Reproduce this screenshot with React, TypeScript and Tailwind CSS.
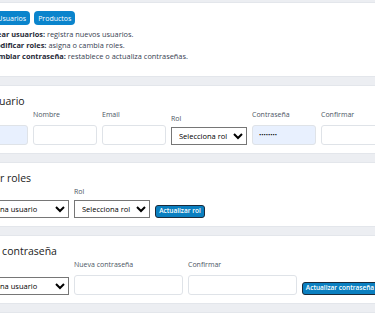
import { useState } from 'react';

const font = { fontFamily: '"Open Sans", "Noto Sans", Arial, sans-serif' };

const Label = ({ children, sel }: { children: string; sel?: boolean }) => (
    <label className={`block text-[7px] leading-[9px] text-[#4b5563] ${sel ? 'mb-[4px]' : 'mb-[6px]'}`}>{children}</label>
);

const TextField = ({ label, w, blue, value, type = 'text' }: { label: string; w: string; blue?: boolean; value?: string; type?: string }) => (
    <div>
        <Label>{label}</Label>
        <input
            type={type}
            defaultValue={value}
            className={`block ${w} h-[20px] px-[6px] text-[6px] border border-[#dfe3e8] rounded-[3px] outline-none ${blue ? 'bg-[#e8f0fe]' : 'bg-white'}`}
        />
    </div>
);

const SelectField = ({ label, w, placeholder }: { label: string; w: string; placeholder: string }) => (
    <div>
        <Label sel>{label}</Label>
        <select className={`block ${w} h-[18px] pl-[3px] text-[7.5px] text-black bg-white border border-[#767676]`}>
            <option>{placeholder}</option>
        </select>
    </div>
);

const ActionButton = ({ children, w }: { children: string; w: string }) => (
    <button className={`block ${w} h-[13px] shrink-0 rounded-[3px] border border-[#1b2a3a] bg-[#0a7fc0] text-white text-[6.5px] font-semibold leading-none`}>
        {children}
    </button>
);

const Card = ({ title, children }: { title: string; children: React.ReactNode }) => (
    <div className="bg-white border border-[#e3e6eb] rounded-[4px] px-[4px] pt-[8px] pb-[8px]">
        <h3 className="text-[10.5px] leading-[14px] mb-[2px] text-[#222]">{title}</h3>
        <div className="px-[6px]">{children}</div>
    </div>
);

export default function App() {
    const [tab, setTab] = useState('Usuarios');

    return (
        <div className="h-[320px] w-[375px] overflow-hidden bg-[#eceef2]" style={font}>
            <div className="-ml-[47px] w-[540px] pt-[2px] flex flex-col gap-[8px]">
                <div className="bg-white border border-[#e3e6eb] rounded-[4px] px-[10px] pt-[8px] pb-[14px]">
                    <div className="flex gap-[4px]">
                        {['Inicio', 'Usuarios', 'Productos'].map(t => (
                            <button
                                key={t}
                                onClick={() => setTab(t)}
                                className={`h-[14px] px-[4px] rounded-[4px] text-white text-[7px] leading-none ${tab === t ? 'bg-[#0a84cc]' : 'bg-[#0a84cc]'}`}
                            >
                                {t}
                            </button>
                        ))}
                    </div>
                    <ul className="mt-[4px] pl-[25px] list-disc text-[7.4px] leading-[11px] text-[#374151]">
                        <li><b className="text-[#1f2937]">Crear usuarios:</b> registra nuevos usuarios.</li>
                        <li><b className="text-[#1f2937]">Modificar roles:</b> asigna o cambia roles.</li>
                        <li><b className="text-[#1f2937]">Cambiar contraseña:</b> restablece o actualiza contraseñas.</li>
                    </ul>
                </div>

                <Card title="Crear usuario">
                    <div className="flex items-end gap-[5px]">
                        <TextField label="Usuario" w="w-[64px]" blue />
                        <TextField label="Nombre" w="w-[64px]" />
                        <TextField label="Email" w="w-[64px]" />
                        <SelectField label="Rol" w="w-[76px]" placeholder="Selecciona rol" />
                        <TextField label="Contraseña" w="w-[64px]" blue type="password" value="12345678" />
                        <TextField label="Confirmar" w="w-[64px]" />
                    </div>
                </Card>

                <Card title="Modificar roles">
                    <div className="flex items-end gap-[5px]">
                        <SelectField label="Usuario" w="w-[105px]" placeholder="Selecciona usuario" />
                        <SelectField label="Rol" w="w-[76px]" placeholder="Selecciona rol" />
                        <ActionButton w="w-[50px]">Actualizar rol</ActionButton>
                    </div>
                </Card>

                <Card title="Cambiar contraseña">
                    <div className="flex items-end gap-[5px]">
                        <SelectField label="Usuario" w="w-[105px]" placeholder="Selecciona usuario" />
                        <TextField label="Nueva contraseña" w="w-[109px]" />
                        <TextField label="Confirmar" w="w-[109px]" />
                        <ActionButton w="w-[76px]">Actualizar contraseña</ActionButton>
                    </div>
                </Card>

                <div className="bg-white border border-[#e3e6eb] rounded-[4px] h-[60px]" />
            </div>
        </div>
    );
}
